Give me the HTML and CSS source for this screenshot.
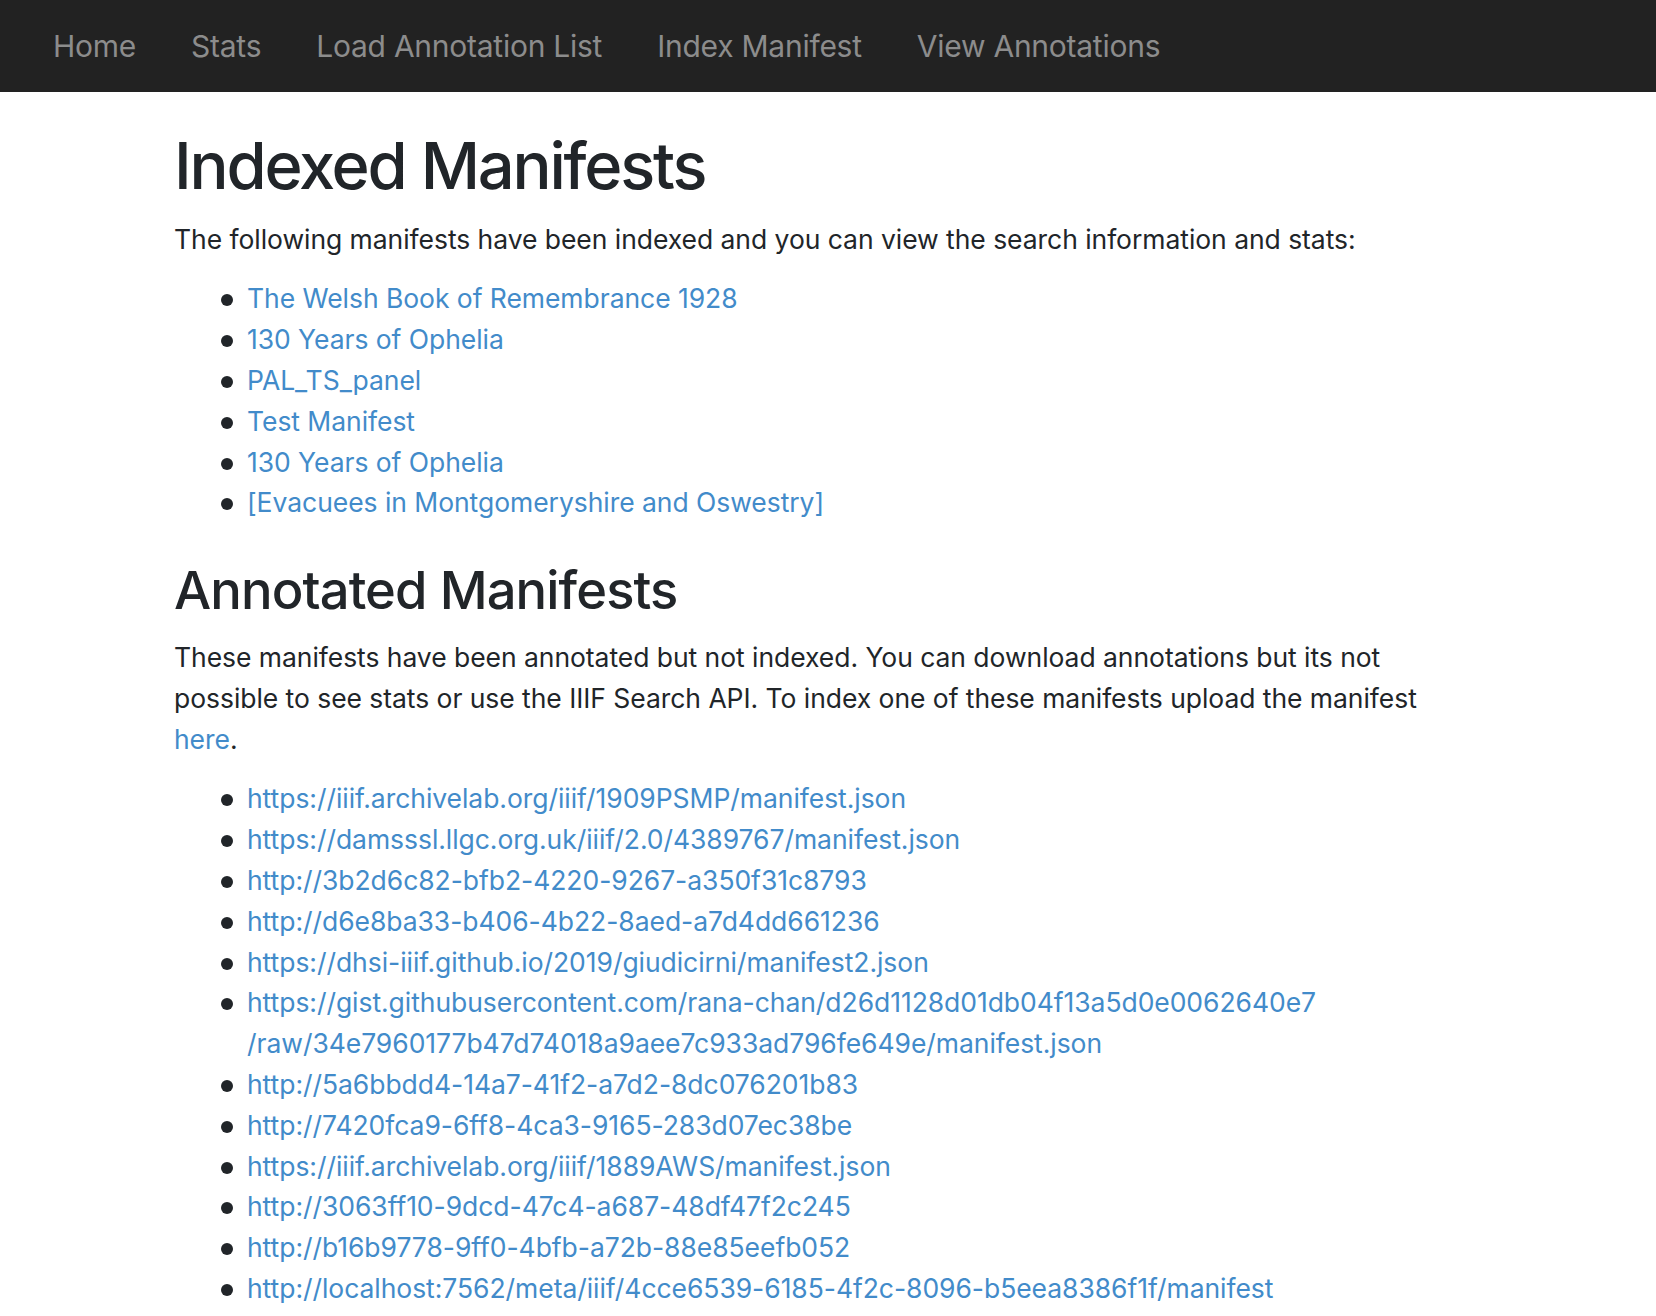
FILE: index.html
```html
<!DOCTYPE html>
<html lang="en">
<head>
<meta charset="utf-8">
<title>Indexed Manifests</title>
<link rel="stylesheet" href="styles.css">
</head>
<body>
<nav class="navbar">
  <a class="nav-link" href="#">Home</a>
  <a class="nav-link" href="#">Stats</a>
  <a class="nav-link" href="#">Load Annotation List</a>
  <a class="nav-link" href="#">Index Manifest</a>
  <a class="nav-link" href="#">View Annotations</a>
</nav>
<main class="container">
  <h1 class="title">Indexed Manifests</h1>
  <p class="lead-text">The following manifests have been indexed and you can view the search information and stats:</p>
  <ul class="link-list">
    <li><a href="#">The Welsh Book of Remembrance 1928</a></li>
    <li><a href="#">130 Years of Ophelia</a></li>
    <li><a href="#">PAL_TS_panel</a></li>
    <li><a href="#">Test Manifest</a></li>
    <li><a href="#">130 Years of Ophelia</a></li>
    <li><a href="#">[Evacuees in Montgomeryshire and Oswestry]</a></li>
  </ul>
  <h2 class="subtitle">Annotated Manifests</h2>
  <p class="lead-text">These manifests have been annotated but not indexed. You can download annotations but its not possible to see stats or use the IIIF Search API. To index one of these manifests upload the manifest <a href="#">here</a>.</p>
  <ul class="link-list">
    <li><a href="#">https://iiif.archivelab.org/iiif/1909PSMP/manifest.json</a></li>
    <li><a href="#">https://damsssl.llgc.org.uk/iiif/2.0/4389767/manifest.json</a></li>
    <li><a href="#">http://3b2d6c82-bfb2-4220-9267-a350f31c8793</a></li>
    <li><a href="#">http://d6e8ba33-b406-4b22-8aed-a7d4dd661236</a></li>
    <li><a href="#">https://dhsi-iiif.github.io/2019/giudicirni/manifest2.json</a></li>
    <li><a href="#">https://gist.githubusercontent.com/rana-chan/d26d1128d01db04f13a5d0e0062640e7<wbr>/raw/34e7960177b47d74018a9aee7c933ad796fe649e/manifest.json</a></li>
    <li><a href="#">http://5a6bbdd4-14a7-41f2-a7d2-8dc076201b83</a></li>
    <li><a href="#">http://7420fca9-6ff8-4ca3-9165-283d07ec38be</a></li>
    <li><a href="#">https://iiif.archivelab.org/iiif/1889AWS/manifest.json</a></li>
    <li><a href="#">http://3063ff10-9dcd-47c4-a687-48df47f2c245</a></li>
    <li><a href="#">http://b16b9778-9ff0-4bfb-a72b-88e85eefb052</a></li>
    <li><a href="#">http://localhost:7562/meta/iiif/4cce6539-6185-4f2c-8096-b5eea8386f1f/manifest</a></li>
  </ul>
</main>
</body>
</html>
```
FILE: styles.css
```css
html, body {
  margin: 0;
  padding: 0;
  background: #fff;
}
body {
  font-family: Inter, "Noto Sans", "Liberation Sans", sans-serif;
  font-size: 26.5px;
  line-height: 40.8px;
  letter-spacing: -0.05px;
  color: #212529;
}
a {
  color: #428bca;
  text-decoration: none;
}
.navbar {
  display: flex;
  align-items: center;
  height: 92px;
  padding: 0 0 0 25.5px;
  background: #222222;
  box-sizing: border-box;
}
.nav-link {
  color: #8c8c8c;
  font-size: 30px;
  line-height: 1.5;
  letter-spacing: -0.25px;
  padding: 0 27.5px;
}
.container {
  width: 1308px;
  margin: 0 auto;
  padding-top: 33px;
}
.title {
  font-size: 65px;
  font-weight: 500;
  line-height: 81.6px;
  letter-spacing: -2.2px;
  margin: 0 0 12px;
}
.subtitle {
  font-size: 52.5px;
  font-weight: 500;
  line-height: 65.3px;
  letter-spacing: -0.9px;
  margin: 0 0 13.6px;
}
.lead-text {
  margin: 0 0 19px;
}
.link-list {
  margin: 0 0 35px;
  padding-left: 73px;
  list-style: none;
}
.link-list li {
  display: flex;
  align-items: flex-start;
}
.link-list li::before {
  content: "";
  flex: 0 0 12px;
  width: 12px;
  height: 12px;
  margin: 16px 14px 0 -26px;
  border-radius: 50%;
  background: #212529;
}
```
